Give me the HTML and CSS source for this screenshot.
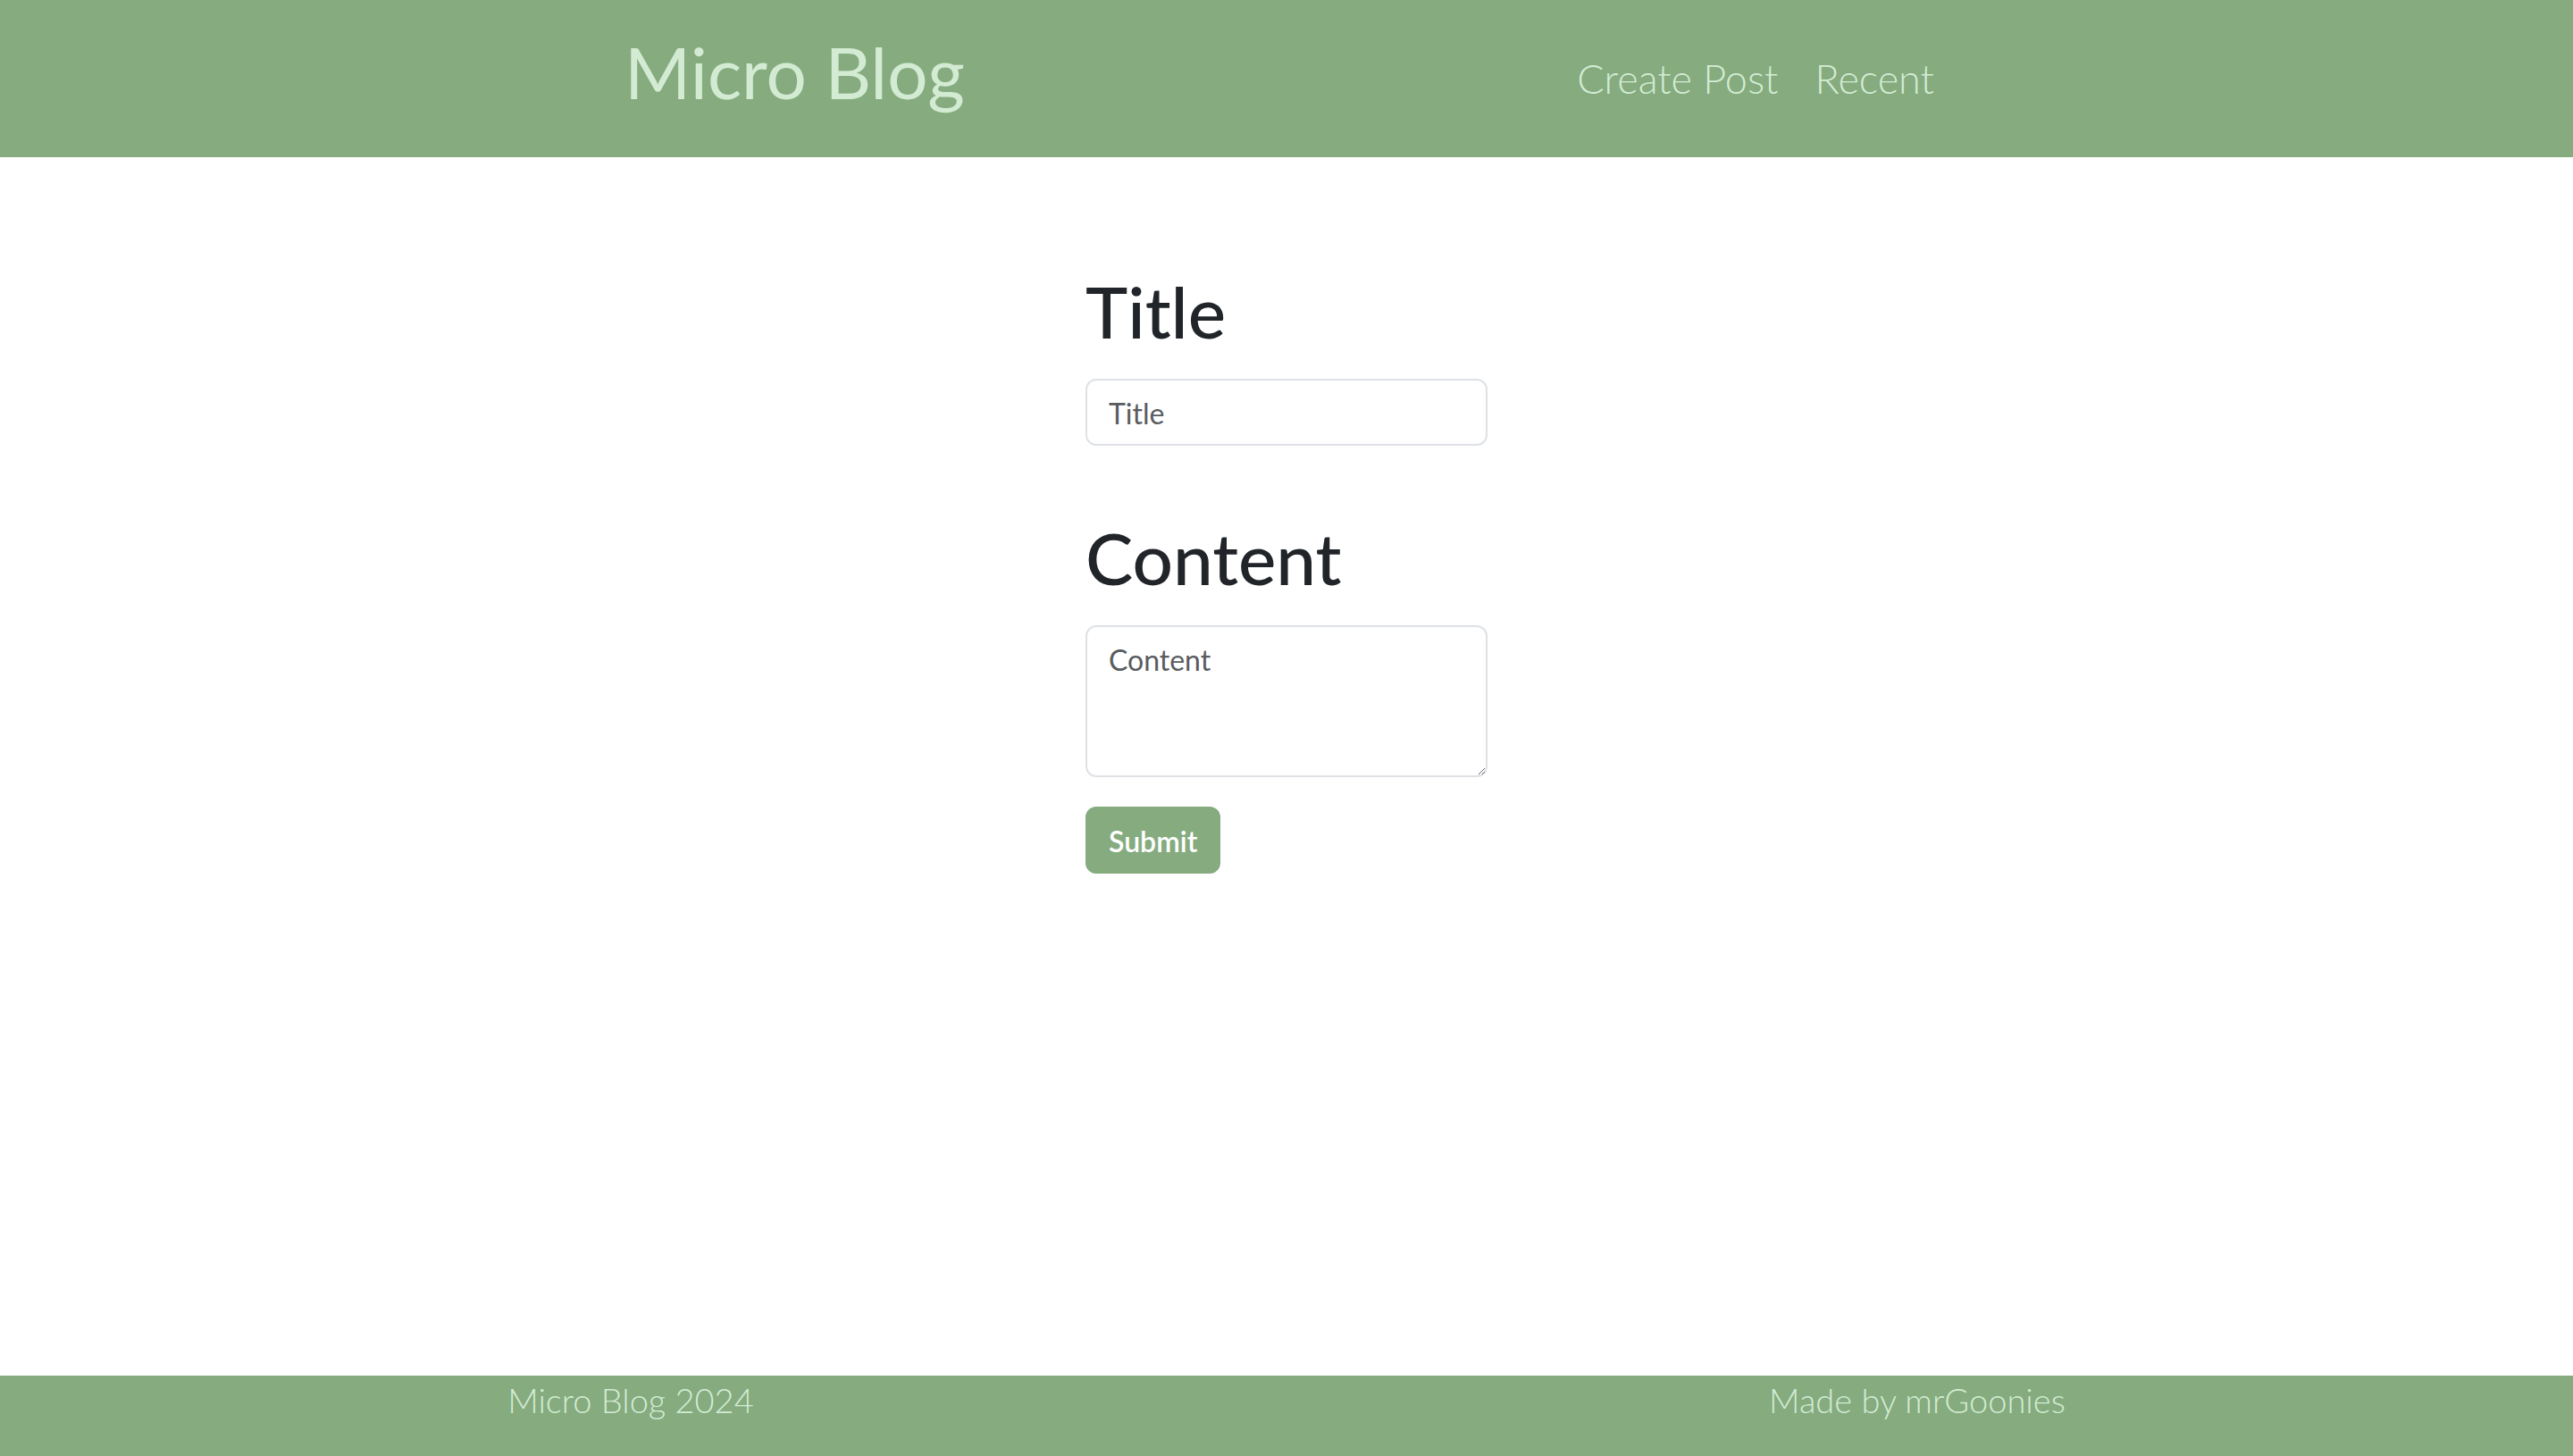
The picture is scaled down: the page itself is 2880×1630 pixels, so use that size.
FILE: index.html
```html
<!DOCTYPE html>
<html lang="en">
<head>
<meta charset="utf-8">
<title>Micro Blog</title>
<link rel="stylesheet" href="styles.css">
</head>
<body>
<header class="site-header">
  <a class="brand" href="#">Micro Blog</a>
  <nav class="nav">
    <a class="nav-link" href="#">Create Post</a>
    <a class="nav-link" href="#">Recent</a>
  </nav>
</header>
<main class="main">
  <form class="post-form">
    <h1 class="field-title">Title</h1>
    <input class="form-control" type="text" placeholder="Title">
    <h1 class="field-title field-title-gap">Content</h1>
    <textarea class="form-control textarea" placeholder="Content"></textarea>
    <div class="actions">
      <button class="btn" type="button">Submit</button>
    </div>
  </form>
</main>
<footer class="site-footer">
  <p class="footer-text">Micro Blog 2024</p>
  <p class="footer-text">Made by mrGoonies</p>
</footer>
</body>
</html>
```

FILE: styles.css
```css
* { box-sizing: border-box; }
html, body { margin: 0; padding: 0; }
body {
  font-family: Lato, "Open Sans", "Liberation Sans", sans-serif;
  color: #212529;
  background: #ffffff;
  min-height: 100vh;
  display: flex;
  flex-direction: column;
}
.site-header {
  height: 176px;
  background: #85ab7f;
  display: flex;
  align-items: center;
  justify-content: space-between;
  padding: 0 715px 0 699px;
}
.brand {
  font-size: 80px;
  line-height: 96px;
  font-weight: 400;
  color: #d3ebd3;
  text-decoration: none;
  margin-bottom: 16px;
}
.nav {
  display: flex;
  gap: 41px;
}
.nav-link {
  font-size: 45px;
  line-height: 56px;
  font-weight: 300;
  color: #d3ebd3;
  text-decoration: none;
}
.main {
  flex: 1;
  display: flex;
  justify-content: center;
  padding-top: 124px;
}
.post-form {
  width: 450px;
  display: flex;
  flex-direction: column;
}
.field-title {
  margin: 0 0 28px;
  font-size: 80px;
  line-height: 96px;
  font-weight: 500;
  color: #212529;
}
.field-title-gap { margin-top: 77px; }
.form-control {
  display: block;
  width: 100%;
  font-family: inherit;
  font-size: 32px;
  line-height: 48px;
  padding: 13px 24px 10px;
  border: 2px solid #dee2e6;
  border-radius: 12px;
  color: #212529;
  background: #fff;
  outline: none;
}
.form-control::placeholder { color: #595c5f; opacity: 1; }
.textarea {
  height: 170px;
  resize: vertical;
  padding-top: 13px;
}
.actions { margin-top: 33px; }
.btn {
  font-family: inherit;
  font-size: 32px;
  line-height: 47px;
  font-weight: 600;
  color: #fff;
  background: #85ab7f;
  border: 2px solid #85ab7f;
  border-radius: 12px;
  padding: 13px 24px 11px;
  cursor: pointer;
}
.site-footer {
  height: 90px;
  background: #85ab7f;
  display: flex;
  justify-content: space-around;
  align-items: flex-start;
}
.footer-text {
  margin: 0;
  font-size: 38px;
  line-height: 54px;
  font-weight: 300;
  color: #d3ebd3;
}
```
